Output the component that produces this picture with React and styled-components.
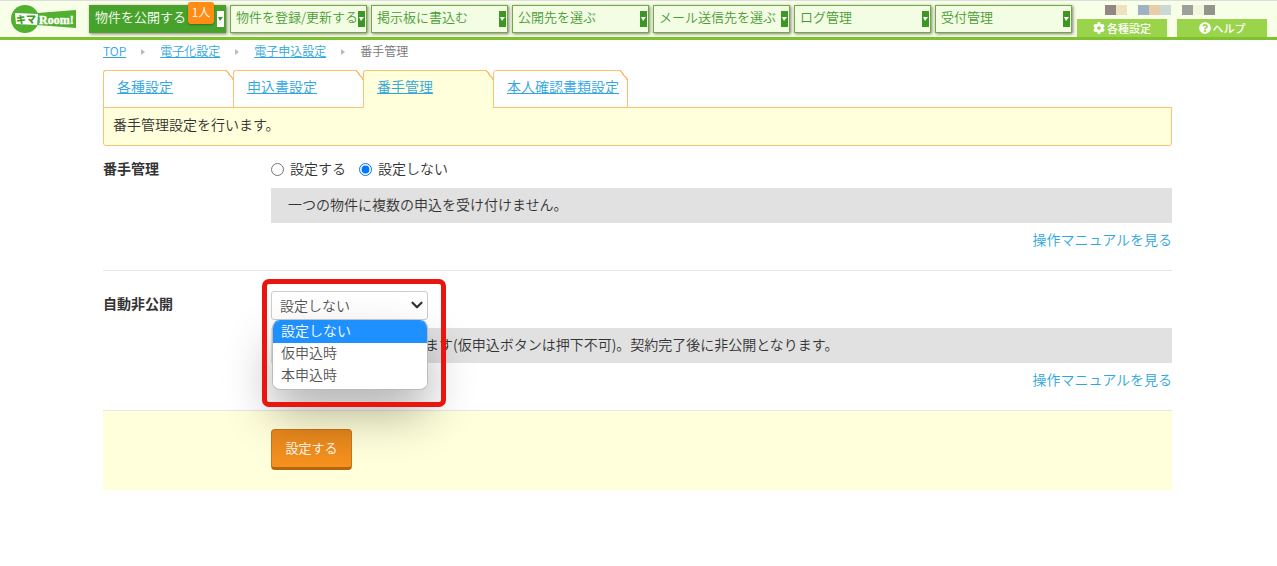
import React from 'react';
import styled, { createGlobalStyle } from 'styled-components';
import { ChevronDown } from 'lucide-react';
import { FaCog, FaQuestionCircle } from 'react-icons/fa';

const GlobalStyle = createGlobalStyle`
    * {
        box-sizing: border-box;
    }
    body {
        margin: 0;
        background: #fff;
        color: #333;
        font-family: "Noto Sans CJK JP", sans-serif;
        font-size: 14px;
        font-weight: 350;
        line-height: 24px;
    }
    a {
        color: #2ea7e0;
    }
`

const navItems = [
    { label: '物件を公開する', badge: '1人', active: true },
    { label: '物件を登録/更新する' },
    { label: '掲示板に書込む' },
    { label: '公開先を選ぶ' },
    { label: 'メール送信先を選ぶ' },
    { label: 'ログ管理' },
    { label: '受付管理' },
];

const mosaic = ['#948783', '#efe3bf', 'transparent', '#9fb2c3', '#e8cda8', '#c8dad3', 'transparent', '#9da09d', '#f3f6dd', '#91958c'];

const crumbs = ['TOP', '電子化設定', '電子申込設定'];

const tabs = ['各種設定', '申込書設定', '番手管理', '本人確認書類設定'];

const options = ['設定しない', '仮申込時', '本申込時'];

function Logo() {
    return (
        <LogoSvg viewBox="0 0 66 30" role="img" aria-label="キマRoom!">
            <circle cx="14" cy="15" r="14" fill="#51b02f" />
            <path d="M26 9 L65 6 V24 L26 21 Z" fill="#51b02f" />
            <path d="M4 9 L27 10 L26 21 L5 20 Z" fill="#fff" />
            <text x="5" y="19" fontSize="10" fontWeight="900" fill="#3f9c25">キマ</text>
            <text x="28" y="20" fontSize="12" fontWeight="700" fontFamily="Liberation Serif" fill="#fff" stroke="#fff" strokeWidth="0.4">Room!</text>
        </LogoSvg>
    )
}

export default function App() {
    return (
        <>
            <GlobalStyle />
            <Header>
                <Logo />
                <Nav>
                    {navItems.map(item => (
                        <NavButton key={item.label} type="button" $active={item.active}>
                            {item.label}
                            {item.badge && <Badge>{item.badge}</Badge>}
                            <Arrow $active={item.active} />
                        </NavButton>
                    ))}
                </Nav>
                <Account>
                    <Mosaic>
                        {mosaic.map((color, i) => <Cell key={i} $color={color} />)}
                    </Mosaic>
                    <AccountLinks>
                        <AccountLink href="#settings"><FaCog />各種設定</AccountLink>
                        <AccountLink href="#help"><FaQuestionCircle />ヘルプ</AccountLink>
                    </AccountLinks>
                </Account>
            </Header>
            <Main>
                <Breadcrumb>
                    {crumbs.map(crumb => (
                        <Crumb key={crumb}><a href="#crumb">{crumb}</a></Crumb>
                    ))}
                    <Crumb>番手管理</Crumb>
                </Breadcrumb>
                <Tabs>
                    {tabs.map(tab => (
                        <Tab key={tab} href="#tab" $active={tab === '番手管理'}>{tab}</Tab>
                    ))}
                </Tabs>
                <Intro>番手管理設定を行います。</Intro>
                <form>
                    <Row>
                        <Heading>番手管理</Heading>
                        <div>
                            <Radios>
                                <RadioLabel><Radio type="radio" name="order" />設定する</RadioLabel>
                                <RadioLabel><Radio type="radio" name="order" defaultChecked />設定しない</RadioLabel>
                            </Radios>
                            <Note>一つの物件に複数の申込を受け付けません。</Note>
                            <Manual href="#manual">操作マニュアルを見る</Manual>
                        </div>
                    </Row>
                    <Row>
                        <Heading as="label" htmlFor="auto-private">自動非公開</Heading>
                        <div>
                            <SelectWrapper>
                                <Select id="auto-private">
                                    {options.map(option => <option key={option}>{option}</option>)}
                                </Select>
                                <SelectIcon size={18} strokeWidth={3} />
                                <Options role="listbox">
                                    {options.map((option, i) => (
                                        <Option key={option} role="option" aria-selected={i === 0}>{option}</Option>
                                    ))}
                                </Options>
                                <Highlight />
                            </SelectWrapper>
                            <Note $besideMenu>ます(仮申込ボタンは押下不可)。契約完了後に非公開となります。</Note>
                            <Manual href="#manual">操作マニュアルを見る</Manual>
                        </div>
                    </Row>
                    <Actions>
                        <Submit type="button">設定する</Submit>
                    </Actions>
                </form>
            </Main>
        </>
    )
}

const Header = styled.header`
    display: flex;
    height: 40px;
    padding: 0 10px 0 11px;
    border-top: 1px solid #ddd;
    border-bottom: 3px solid #7fc22f;
    background: #f8ffe8;
`

const LogoSvg = styled.svg`
    flex: none;
    width: 66px;
    height: 30px;
    margin: 3px 12px 0 0;
`

const Nav = styled.nav`
    display: flex;
    gap: 4px;
    padding-top: 4px;
`

const NavButton = styled.button`
    position: relative;
    width: 137px;
    height: 28px;
    padding: 0 0 4px 5px;
    border: 1px solid ${props => props.$active ? '#5b9a2c' : '#74a840'};
    background: ${props => props.$active ? '#47a22c' : '#f3fde3'};
    box-shadow: 1px 1px 3px rgba(0, 0, 0, 0.5);
    color: ${props => props.$active ? '#fff' : '#4a9b35'};
    font-family: inherit;
    font-size: 13px;
    font-weight: inherit;
    line-height: 22px;
    text-align: left;
    white-space: nowrap;
`

const Badge = styled.span`
    position: absolute;
    top: -4px;
    right: 11px;
    width: 26px;
    height: 22px;
    border-radius: 3px;
    background: #ff8c14;
    box-shadow: 0 1px 2px rgba(0, 0, 0, 0.3);
    color: #fff;
    font-size: 12px;
    line-height: 20px;
    text-align: center;
`

const Arrow = styled.span`
    position: absolute;
    top: 5px;
    right: 1px;
    width: 7px;
    height: 16px;
    background: ${props => props.$active ? '#fff' : '#3c9623'};
    &::after {
        content: "";
        position: absolute;
        top: 6px;
        left: 1px;
        border: solid transparent;
        border-width: 4px 3px 0 2px;
        border-top-color: ${props => props.$active ? '#3c9623' : '#fff'};
    }
`

const Account = styled.div`
    display: flex;
    flex-direction: column;
    justify-content: space-between;
    margin-left: auto;
    padding-top: 4px;
`

const Mosaic = styled.div`
    display: flex;
    padding-left: 28px;
`

const Cell = styled.span`
    width: 11px;
    height: 10px;
    background: ${props => props.$color};
`

const AccountLinks = styled.div`
    display: flex;
    gap: 10px;
`

const AccountLink = styled.a`
    display: flex;
    align-items: center;
    justify-content: center;
    gap: 2px;
    width: 90px;
    height: 18px;
    background: #9ad44b;
    color: #fff;
    font-size: 11px;
    font-weight: 500;
    text-decoration: none;
    svg {
        width: 12px;
        height: 12px;
    }
`

const Main = styled.main`
    padding: 0 105px 0 103px;
`

const Breadcrumb = styled.ol`
    display: flex;
    height: 30px;
    margin: 0;
    padding: 0;
    color: #777;
    font-size: 12px;
    line-height: 22px;
    list-style: none;
`

const Crumb = styled.li`
    display: flex;
    align-items: center;
    height: 22px;
    &:not(:last-child)::after {
        content: "";
        margin: 2px 15px 0;
        border: solid transparent;
        border-width: 3px 0 3px 4px;
        border-left-color: #bbb;
    }
`

const Tabs = styled.nav`
    position: relative;
    z-index: 1;
    display: flex;
    margin-bottom: -1px;
`

const Tab = styled.a`
    position: relative;
    min-width: 130px;
    height: 38px;
    padding: 3px 8px 0 13px;
    border: 1px solid #ffbf73;
    border-right-width: 0;
    border-bottom-color: ${props => props.$active ? '#ffffdb' : '#ffbf73'};
    border-top-left-radius: 3px;
    background: ${props => props.$active ? '#ffffdb' : '#fff'};
    &:last-child {
        border-right-width: 1px;
    }
    &::after {
        content: "";
        position: absolute;
        top: -1px;
        right: -1px;
        width: 8px;
        height: 10px;
        background: linear-gradient(to top right, ${props => props.$active ? '#ffffdb' : '#fff'} 42%, #ffbf73 43%, #ffbf73 54%, #fff 55%);
    }
`

const Intro = styled.p`
    margin: 0;
    padding: 4px 9px 9px;
    border: 1px solid #ffbf73;
    border-radius: 0 0 3px 3px;
    background: #ffffdb;
`

const Row = styled.div`
    display: grid;
    grid-template-columns: 168px 1fr;
    align-items: start;
    padding: 20px 0 19px;
    border-bottom: 1px solid #e6e6e6;
    &:first-child {
        padding-top: 10px;
    }
`

const Heading = styled.div`
    font-weight: 700;
`

const Radios = styled.div`
    display: flex;
    gap: 13px;
`

const RadioLabel = styled.label`
    display: flex;
    align-items: center;
    gap: 6px;
`

const Radio = styled.input`
    width: 13px;
    height: 13px;
    margin: 3px 0 0;
`

const Note = styled.p`
    margin: 8px 0 4px;
    padding: 4px 17px 7px ${props => props.$besideMenu ? '154px' : '17px'};
    background: #e1e1e1;
`

const Manual = styled.a`
    display: block;
    text-align: right;
    text-decoration: none;
`

const SelectWrapper = styled.div`
    position: relative;
    width: 157px;
`

const Select = styled.select`
    display: block;
    width: 100%;
    height: 29px;
    padding: 0 8px 2px;
    appearance: none;
    border: 1px solid #ccc;
    border-radius: 3px;
    background: #fff;
    color: #555;
    font-family: inherit;
    font-size: 14px;
    font-weight: inherit;
`

const SelectIcon = styled(ChevronDown)`
    position: absolute;
    top: 5px;
    right: 2px;
    color: #333;
    pointer-events: none;
`

const Options = styled.ul`
    position: absolute;
    top: 100%;
    left: 1px;
    right: 0;
    z-index: 2;
    margin: 0;
    padding: 0 0 2px;
    overflow: hidden;
    border: 1px solid #bbb;
    border-top-color: #1e90ff;
    border-radius: 8px;
    background: #fff;
    box-shadow: 0 24px 48px rgba(0, 0, 0, 0.3);
    list-style: none;
`

const Option = styled.li`
    padding: 0 8px 4px;
    background: ${props => props['aria-selected'] ? '#1e90ff' : '#fff'};
    color: ${props => props['aria-selected'] ? '#fff' : '#555'};
    line-height: 18px;
`

const Highlight = styled.span`
    position: absolute;
    top: -12px;
    left: -9px;
    z-index: 3;
    width: 184px;
    height: 128px;
    border: 5px solid #e8160c;
    border-radius: 7px;
    pointer-events: none;
`

const Actions = styled.div`
    padding: 18px 0 20px 168px;
    background: #ffffdb;
`

const Submit = styled.button`
    display: block;
    width: 81px;
    height: 41px;
    padding: 0 0 2px;
    border: 1px solid #c9741a;
    border-bottom: 3px solid #b5640f;
    border-radius: 4px;
    background: linear-gradient(#e5861c, #f6921e);
    color: #fff;
    font-family: inherit;
    font-size: 13px;
    font-weight: inherit;
`
